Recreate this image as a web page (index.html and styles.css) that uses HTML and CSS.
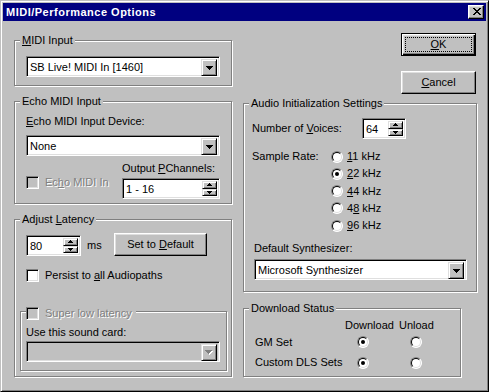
FILE: index.html
```html
<!DOCTYPE html>
<html>
<head>
<meta charset="utf-8">
<title>MIDI/Performance Options</title>
<link rel="stylesheet" href="styles.css">
</head>
<body>
<div class="window">
  <div class="titlebar">
    <span class="title">MIDI/Performance Options</span>
    <span class="close-btn"><svg width="8" height="7" viewBox="0 0 8 7" shape-rendering="crispEdges"><path d="M0 0h2v1H0zM6 0h2v1H6zM1 1h2v1H1zM5 1h2v1H5zM2 2h4v1H2zM3 3h2v1H3zM2 4h4v1H2zM1 5h2v1H1zM5 5h2v1H5zM0 6h2v1H0zM6 6h2v1H6z" fill="#000"/></svg></span>
  </div>
  <div class="client">
    <div class="col-left">
      <div class="group g-midi">
        <span class="legend"><u>M</u>IDI Input</span>
        <div class="combo w194"><span class="combo-text">SB Live! MIDI In [1460]</span><span class="drop"><svg width="7" height="4" viewBox="0 0 7 4" shape-rendering="crispEdges"><path d="M0 0h7v1H0zM1 1h5v1H1zM2 2h3v1H2zM3 3h1v1H3z" fill="#000"/></svg></span></div>
      </div>
      <div class="group g-echo">
        <span class="legend">Echo MIDI Input</span>
        <div class="label"><u>E</u>cho MIDI Input Device:</div>
        <div class="combo w194 echo-combo"><span class="combo-text">None</span><span class="drop"><svg width="7" height="4" viewBox="0 0 7 4" shape-rendering="crispEdges"><path d="M0 0h7v1H0zM1 1h5v1H1zM2 2h3v1H2zM3 3h1v1H3z" fill="#000"/></svg></span></div>
        <div class="echo-row">
          <div class="check disabled echo-check"><span class="box"></span><span class="txt">Ec<u>h</u>o MIDI In</span></div>
          <div class="pch">
            <div class="label">Output <u>P</u>Channels:</div>
            <div class="spin w98"><span class="spin-text">1 - 16</span><span class="updown"><span class="ud"><svg width="5" height="3" viewBox="0 0 5 3" shape-rendering="crispEdges"><path d="M2 0h1v1H2zM1 1h3v1H1zM0 2h5v1H0z" fill="#000"/></svg></span><span class="ud"><svg width="5" height="3" viewBox="0 0 5 3" shape-rendering="crispEdges"><path d="M0 0h5v1H0zM1 1h3v1H1zM2 2h1v1H2z" fill="#000"/></svg></span></span></div>
          </div>
        </div>
      </div>
      <div class="group g-lat">
        <span class="legend">Adjust <u>L</u>atency</span>
        <div class="lat-row">
          <div class="spin w55"><span class="spin-text">80</span><span class="updown"><span class="ud"><svg width="5" height="3" viewBox="0 0 5 3" shape-rendering="crispEdges"><path d="M2 0h1v1H2zM1 1h3v1H1zM0 2h5v1H0z" fill="#000"/></svg></span><span class="ud"><svg width="5" height="3" viewBox="0 0 5 3" shape-rendering="crispEdges"><path d="M0 0h5v1H0zM1 1h3v1H1zM2 2h1v1H2z" fill="#000"/></svg></span></span></div>
          <span class="ms">ms</span>
          <div class="btn w93"><span>Set to <u>D</u>efault</span></div>
        </div>
        <div class="check persist"><span class="box"></span><span class="txt">Persist to <u>a</u>ll Audiopaths</span></div>
        <div class="group g-sub">
          <div class="legend check disabled sub-legend"><span class="box"></span><span class="txt">Super low latency</span></div>
          <div class="label">Use this sound card:</div>
          <div class="combo w194 combo-disabled"><span class="combo-text"></span><span class="drop"><svg width="8" height="5" viewBox="0 0 8 5" shape-rendering="crispEdges"><path d="M1 1h7v1H1zM2 2h5v1H2zM3 3h3v1H3zM4 4h1v1H4z" fill="#fff"/><path d="M0 0h7v1H0zM1 1h5v1H1zM2 2h3v1H2zM3 3h1v1H3z" fill="#808080"/></svg></span></div>
        </div>
      </div>
    </div>
    <div class="col-right">
      <div class="buttons">
        <div class="btn default"><span><u>O</u>K</span></div>
        <div class="btn cancel"><span><u>C</u>ancel</span></div>
      </div>
      <div class="group g-audio">
        <span class="legend">Audio Initialization Settings</span>
        <div class="voices-row">
          <span class="lbl-voices">Number of <u>V</u>oices:</span>
          <div class="spin w44"><span class="spin-text">64</span><span class="updown"><span class="ud"><svg width="5" height="3" viewBox="0 0 5 3" shape-rendering="crispEdges"><path d="M2 0h1v1H2zM1 1h3v1H1zM0 2h5v1H0z" fill="#000"/></svg></span><span class="ud"><svg width="5" height="3" viewBox="0 0 5 3" shape-rendering="crispEdges"><path d="M0 0h5v1H0zM1 1h3v1H1zM2 2h1v1H2z" fill="#000"/></svg></span></span></div>
        </div>
        <div class="rate-row">
          <span class="lbl-rate">Sample Rate:</span>
          <div class="radios">
            <div class="ropt"><span class="radio"></span><span class="txt"><u>1</u>1 kHz</span></div>
            <div class="ropt"><span class="radio on"></span><span class="txt"><u>2</u>2 kHz</span></div>
            <div class="ropt"><span class="radio"></span><span class="txt"><u>4</u>4 kHz</span></div>
            <div class="ropt"><span class="radio"></span><span class="txt">4<u>8</u> kHz</span></div>
            <div class="ropt"><span class="radio"></span><span class="txt"><u>9</u>6 kHz</span></div>
          </div>
        </div>
        <div class="label synth-label">Default Synthesizer:</div>
        <div class="combo w213 synth-combo"><span class="combo-text">Microsoft Synthesizer</span><span class="drop"><svg width="7" height="4" viewBox="0 0 7 4" shape-rendering="crispEdges"><path d="M0 0h7v1H0zM1 1h5v1H1zM2 2h3v1H2zM3 3h1v1H3z" fill="#000"/></svg></span></div>
      </div>
      <div class="group g-dl">
        <span class="legend">Download Status</span>
        <div class="dl-grid">
          <span></span><span class="hdr">Download</span><span class="hdr">Unload</span>
          <span class="rl">GM Set</span><span class="rc c1"><span class="radio on"></span></span><span class="rc c2"><span class="radio"></span></span>
          <span class="rl">Custom DLS Sets</span><span class="rc c1"><span class="radio on"></span></span><span class="rc c2"><span class="radio"></span></span>
        </div>
      </div>
    </div>
  </div>
</div>
</body>
</html>
```
FILE: styles.css
```css
* { box-sizing: border-box; }
html, body { margin: 0; padding: 0; }
body {
  width: 489px; height: 392px; overflow: hidden;
  background: #c0c0c0;
  font-family: "Liberation Sans", Arial, sans-serif;
  font-size: 11px; line-height: 13px; color: #000;
}
u { text-decoration: underline; text-underline-offset: 1px; }

.window {
  width: 489px; height: 392px;
  background: #c0c0c0;
  border: 1px solid; border-color: #c0c0c0 #000 #000 #c0c0c0;
  box-shadow: inset 1px 1px #fff, inset -1px -1px #808080;
  padding: 2px;
  display: flex; flex-direction: column;
}
.titlebar {
  flex: none; height: 18px;
  background: #000080; color: #fff;
  font-weight: bold;
  display: flex; align-items: center; justify-content: space-between;
  padding: 0 2px 0 3px;
}
.title { letter-spacing: 0.5px; white-space: nowrap; }
.close-btn {
  width: 16px; height: 14px;
  background: #c0c0c0;
  border: 1px solid; border-color: #fff #000 #000 #fff;
  box-shadow: inset -1px -1px #808080, inset 1px 1px #dfdfdf;
  display: flex; align-items: flex-start;
  padding: 2px 0 0 4px;
}
.close-btn svg { display: block; }

.client { flex: 1; display: flex; gap: 11px; padding-left: 11px; }
.col-left { width: 218px; flex: none; display: flex; flex-direction: column; padding-top: 19px; }
.col-right { width: 234px; flex: none; display: flex; flex-direction: column; }

/* group box */
.group {
  position: relative;
  border: 1px solid #808080;
  box-shadow: inset 1px 1px #fff, 1px 1px #fff;
}
.legend {
  position: absolute; top: -7px; left: 5px;
  padding: 0 2px; background: #c0c0c0;
  white-space: nowrap;
}
.label { white-space: nowrap; }

/* sunken field */
.combo, .spin {
  height: 21px; background: #fff;
  border: 1px solid; border-color: #808080 #fff #fff #808080;
  box-shadow: inset 1px 1px #000, inset -1px -1px #dfdfdf;
  padding: 2px;
  display: flex;
}
.combo-text, .spin-text { flex: 1; line-height: 17px; padding-left: 1px; white-space: nowrap; overflow: hidden; }
.drop {
  width: 16px; height: 17px; flex: none;
  background: #c0c0c0;
  border: 1px solid; border-color: #dfdfdf #000 #000 #dfdfdf;
  box-shadow: inset 1px 1px #fff, inset -1px -1px #808080;
  display: flex; align-items: center; justify-content: center;
}
.drop svg { display: block; }
.combo-disabled { background: #c0c0c0; }

.updown { width: 15px; flex: none; display: flex; flex-direction: column; }
.ud {
  flex: 1;
  background: #c0c0c0;
  border: 1px solid; border-color: #dfdfdf #000 #000 #dfdfdf;
  box-shadow: inset 1px 1px #fff, inset -1px -1px #808080;
  display: flex; align-items: center; justify-content: center;
}
.ud svg { display: block; }

.w194 { width: 194px; }
.w213 { width: 213px; }
.w98 { width: 98px; }
.w55 { width: 55px; }
.w44 { width: 44px; }
.w93 { width: 93px; }

/* checkbox */
.check { display: flex; align-items: center; white-space: nowrap; }
.box {
  width: 13px; height: 13px; flex: none; background: #fff;
  border: 1px solid; border-color: #808080 #fff #fff #808080;
  box-shadow: inset 1px 1px #000, inset -1px -1px #dfdfdf;
}
.check .txt { margin-left: 6px; }
.disabled .box { background: #c0c0c0; }
.disabled .txt { color: #808080; text-shadow: 1px 1px #fff; }

/* radio */
.radio {
  display: block; position: relative;
  width: 12px; height: 12px; flex: none;
  border-radius: 50%; background: #fff;
  border: 1px solid; border-color: #808080 #fff #fff #808080;
}
.radio::before {
  content: ""; position: absolute; inset: 0; border-radius: 50%;
  border: 1px solid; border-color: #000 #dfdfdf #dfdfdf #000;
}
.radio.on::after {
  content: ""; position: absolute; left: 3px; top: 3px;
  width: 4px; height: 4px; border-radius: 50%; background: #000;
}

/* buttons */
.btn {
  position: relative;
  height: 23px; background: #c0c0c0;
  border: 1px solid; border-color: #fff #000 #000 #fff;
  box-shadow: inset -1px -1px #808080, inset 1px 1px #dfdfdf;
  display: flex; align-items: center; justify-content: center;
  white-space: nowrap;
}
.buttons { align-self: flex-end; margin-right: 1px; padding-top: 12px; display: flex; flex-direction: column; gap: 15px; }
.buttons .btn { width: 75px; }
.btn.default {
  border: 1px solid #000;
  box-shadow: inset 1px 1px #fff, inset -1px -1px #000, inset -2px -2px #808080, inset 2px 2px #dfdfdf;
}
.btn.default::after {
  content: ""; position: absolute; left: 3px; top: 3px; right: 3px; bottom: 3px;
  border: 1px dotted #000;
}

/* left groups */
.g-midi { height: 46px; padding: 15px 0 0 11px; }
.g-echo { margin-top: 15px; height: 103px; padding: 13px 0 0 11px; }
.echo-combo { margin-top: 7px; }
.echo-row { display: flex; }
.echo-check { width: 96px; margin-top: 20px; align-self: flex-start; }
.pch { margin-top: 6px; }
.pch .spin { margin-top: 3px; }

.g-lat { margin-top: 15px; height: 158px; padding: 13px 0 0 11px; }
.lat-row { display: flex; align-items: flex-start; }
.lat-row .spin { margin-top: 2px; }
.ms { width: 33px; padding-left: 6px; margin-top: 6px; }
.persist { margin-top: 13px; }
.g-sub { margin-top: 29px; margin-left: -6px; width: 207px; height: 60px; padding: 14px 0 0 5px; }
.sub-legend { top: -5px; left: 5px; padding: 0 4px 0 0; }
.sub-legend .txt { margin-left: 6px; }
.g-sub .combo { margin-top: 2px; }

/* right groups */
.g-audio { margin-top: 9px; height: 189px; padding: 14px 0 0 8px; }
.voices-row { display: flex; align-items: center; height: 21px; }
.lbl-voices { width: 110px; white-space: nowrap; }
.rate-row { display: flex; margin-top: 9px; }
.lbl-rate { width: 79px; line-height: 17.25px; white-space: nowrap; }
.ropt { display: flex; align-items: center; height: 17.25px; white-space: nowrap; }
.ropt .txt { margin-left: 4px; }
.synth-label { margin-top: 8px; padding-left: 2px; }
.synth-combo { margin-top: 4px; margin-left: 2px; }

.g-dl { margin-top: 16px; width: 218px; height: 69px; padding: 10px 0 0 11px; }
.dl-grid { display: grid; grid-template-columns: 90px 54px 60px; grid-template-rows: 13px 20px 21px; align-items: center; }
.dl-grid .rl { white-space: nowrap; }
.rc { display: flex; }
.c1 { padding-left: 12px; }
.c2 { padding-left: 11px; }
.hdr { white-space: nowrap; }
```
